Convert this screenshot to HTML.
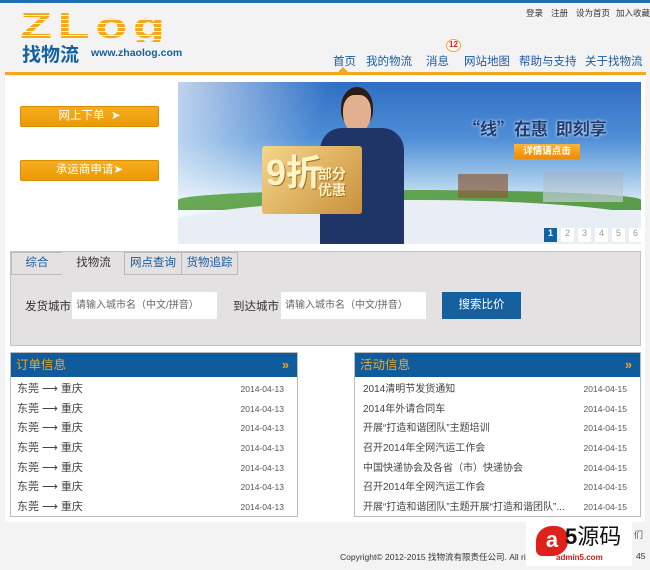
<!DOCTYPE html>
<html><head><meta charset="utf-8"><style>
*{margin:0;padding:0;box-sizing:border-box}
body{width:650px;height:570px;background:#f3f3f3;font-family:"Liberation Sans","Noto Sans CJK SC",sans-serif;position:relative;overflow:hidden;font-size:12px;color:#333}
.a{position:absolute;white-space:nowrap}
.top{left:0;top:0;width:650px;height:3px;background:#1c6db3}
.tl{top:7px;font-size:8.5px;color:#333}
.nav{top:53px;font-size:11.5px;color:#1a5c9e}
.btn{left:20px;width:139px;height:21px;background:linear-gradient(#f6ad1e,#ec9a05);border:1px solid #d88c00;border-radius:2px;color:#fff;font-size:11.5px;text-align:center;line-height:19px}
.tab{top:252px;height:23px;border:1px solid #b9b9b9;font-size:11.5px;color:#1a5c9e;text-align:center;line-height:21px;background:#e3e1e1}
.inp{top:292px;width:145px;height:27px;background:#fff;font-size:10px;color:#666;line-height:27px;padding-left:4px}
.box{border:1px solid #bcbcbc;background:#fff}
.hd{height:24px;background:#0f5b9b;color:#f4a81f;font-size:12.5px;line-height:24px;padding-left:5px;position:relative}
.hd span{position:absolute;right:8px;top:0;font-weight:bold}
.row{height:19.7px;line-height:19.7px;font-size:11px;position:relative;padding-left:6px;color:#444}
.row i{position:absolute;right:13px;font-style:normal;font-size:8.5px;color:#555}
</style></head><body>
<div class="a top"></div>
<div class="a tl" style="left:526px">登录</div>
<div class="a tl" style="left:551px">注册</div>
<div class="a tl" style="left:576px">设为首页</div>
<div class="a tl" style="left:616px">加入收藏</div>
<!-- logo -->
<div class="a" style="left:20px;top:12px;width:170px;height:30px;overflow:hidden">
 <div class="a" style="left:0;top:-4px;font:900 36px/36px 'Liberation Sans';color:#f7a816;letter-spacing:4px;transform:scaleX(1.45);transform-origin:left">ZLog</div>
 <div class="a" style="left:0;top:0;width:170px;height:30px;background:repeating-linear-gradient(rgba(0,0,0,0) 0 3px,#f3f3f3 3px 4px)"></div>
</div>
<div class="a" style="left:22px;top:40px;font-size:19px;font-weight:bold;color:#15609f">找物流</div>
<div class="a" style="left:91px;top:47px;font-size:10.5px;font-weight:bold;color:#15609f">www.zhaolog.com</div>
<div class="a nav" style="left:333px">首页</div>
<div class="a nav" style="left:366px">我的物流</div>
<div class="a nav" style="left:426px">消息</div>
<div class="a nav" style="left:464px">网站地图</div>
<div class="a nav" style="left:519px">帮助与支持</div>
<div class="a nav" style="left:585px">关于找物流</div>
<div class="a" style="left:446px;top:39px;width:15px;height:13px;border:1.5px solid #f4a81f;border-radius:50%;background:#fff;color:#d22;font-size:8px;text-align:center;line-height:10px;font-weight:bold">12</div>
<div class="a" style="left:5px;top:72px;width:641px;height:3px;background:#f4a81f"></div>
<div class="a" style="left:337px;top:67px;width:0;height:0;border-left:6px solid transparent;border-right:6px solid transparent;border-bottom:6px solid #f4a81f"></div>
<!-- content -->
<div class="a" style="left:5px;top:76px;width:640px;height:446px;background:#fff"></div>
<div class="a btn" style="top:106px">网上下单 &nbsp;➤</div>
<div class="a btn" style="top:160px">承运商申请➤</div>
<!-- banner -->
<div class="a" style="left:178px;top:82px;width:463px;height:162px;overflow:hidden;background:linear-gradient(180deg,#2f6ec4 0%,#4f8fd6 35%,#a9cdec 62%,#e9f1f7 78%,#f2f5f7 100%)">
 <div class="a" style="left:0;top:0;width:200px;height:162px;background:linear-gradient(110deg,rgba(255,255,255,.7),rgba(255,255,255,0) 60%)"></div>
 <div class="a" style="left:0;top:108px;width:463px;height:20px;background:linear-gradient(175deg,#58a13a,#3e8b2c);border-radius:50% 50% 0 0;opacity:.85"></div>
 <div class="a" style="left:-20px;top:118px;width:520px;height:60px;background:#e8eef3;border-radius:50% 50% 0 0"></div>
 <div class="a" style="left:365px;top:90px;width:80px;height:30px;background:linear-gradient(#9fb4c8,#c5d3df);opacity:.7"></div>
 <div class="a" style="left:280px;top:92px;width:50px;height:24px;background:#8b5d3c;opacity:.7"></div>
 <div class="a" style="left:163px;top:5px;width:32px;height:40px;background:#2a1d17;border-radius:50% 50% 40% 40%"></div>
 <div class="a" style="left:165px;top:13px;width:28px;height:38px;background:#e2b08f;border-radius:40% 40% 50% 50%"></div>
 <div class="a" style="left:142px;top:46px;width:84px;height:116px;background:#1f3567;border-radius:22px 22px 0 0"></div>
 <div class="a" style="left:84px;top:64px;width:100px;height:68px;background:linear-gradient(135deg,#f5d58c,#c9913a);border-radius:3px"></div>
 <div class="a" style="left:88px;top:66px;font:bold 36px/50px 'Liberation Sans','Noto Sans CJK SC',sans-serif;color:#fff3c8;text-shadow:1px 1px 0 #a3701f">9折</div>
 <div class="a" style="left:140px;top:84px;font:bold 14px/16px 'Noto Sans CJK SC',sans-serif;color:#fff3c8;text-shadow:1px 1px 0 #a3701f">部分<br>优惠</div>
 <div class="a" style="left:285px;top:33px;font:bold 17px 'Noto Sans CJK SC',sans-serif;color:#1f3d75;text-shadow:0 0 3px #fff">“线”在惠 &nbsp;即刻享</div>
 <div class="a" style="left:336px;top:62px;width:66px;height:15px;background:linear-gradient(#fbb437,#ef8a00);color:#fff;font-size:9.5px;font-weight:bold;text-align:center;line-height:15px">详情请点击</div>
 <div class="a" style="left:366px;top:146px;display:flex;gap:4px;font-size:9px">
  <b style="width:13px;height:14px;background:#15609f;color:#fff;text-align:center">1</b><b style="width:13px;height:14px;background:#fff;color:#999;text-align:center;font-weight:normal">2</b><b style="width:13px;height:14px;background:#fff;color:#999;text-align:center;font-weight:normal">3</b><b style="width:13px;height:14px;background:#fff;color:#999;text-align:center;font-weight:normal">4</b><b style="width:13px;height:14px;background:#fff;color:#999;text-align:center;font-weight:normal">5</b><b style="width:13px;height:14px;background:#fff;color:#999;text-align:center;font-weight:normal">6</b>
 </div>
</div>
<!-- search -->
<div class="a" style="left:10px;top:251px;width:631px;height:95px;background:#e3e1e1;border:1px solid #c3c3c3"></div>
<div class="a tab" style="left:11px;width:52px">综合</div>
<div class="a tab" style="left:62px;width:63px;border-color:transparent;color:#333;height:24px">找物流</div>
<div class="a tab" style="left:124px;width:58px">网点查询</div>
<div class="a tab" style="left:181px;width:57px">货物追踪</div>
<div class="a" style="left:25px;top:298px;font-size:11.5px">发货城市</div>
<div class="a inp" style="left:72px">请输入城市名（中文/拼音）</div>
<div class="a" style="left:233px;top:298px;font-size:11.5px">到达城市</div>
<div class="a inp" style="left:281px">请输入城市名（中文/拼音）</div>
<div class="a" style="left:442px;top:292px;width:79px;height:27px;background:#15609f;color:#fff;font-size:11.5px;text-align:center;line-height:27px">搜索比价</div>
<!-- lists -->
<div class="a box" style="left:10px;top:352px;width:288px;height:165px">
 <div class="hd">订单信息<span>»</span></div>
 <div style="padding-top:3px">
 <div class="row">东莞 ⟶ 重庆<i>2014-04-13</i></div>
 <div class="row">东莞 ⟶ 重庆<i>2014-04-13</i></div>
 <div class="row">东莞 ⟶ 重庆<i>2014-04-13</i></div>
 <div class="row">东莞 ⟶ 重庆<i>2014-04-13</i></div>
 <div class="row">东莞 ⟶ 重庆<i>2014-04-13</i></div>
 <div class="row">东莞 ⟶ 重庆<i>2014-04-13</i></div>
 <div class="row">东莞 ⟶ 重庆<i>2014-04-13</i></div>
 </div>
</div>
<div class="a box" style="left:354px;top:352px;width:287px;height:165px">
 <div class="hd">活动信息<span>»</span></div>
 <div style="padding-top:3px;font-size:10px">
 <div class="row" style="font-size:10px;padding-left:8px">2014清明节发货通知<i>2014-04-15</i></div>
 <div class="row" style="font-size:10px;padding-left:8px">2014年外请合同车<i>2014-04-15</i></div>
 <div class="row" style="font-size:10px;padding-left:8px">开展“打造和谐团队”主题培训<i>2014-04-15</i></div>
 <div class="row" style="font-size:10px;padding-left:8px">召开2014年全网汽运工作会<i>2014-04-15</i></div>
 <div class="row" style="font-size:10px;padding-left:8px">中国快递协会及各省（市）快递协会<i>2014-04-15</i></div>
 <div class="row" style="font-size:10px;padding-left:8px">召开2014年全网汽运工作会<i>2014-04-15</i></div>
 <div class="row" style="font-size:10px;padding-left:8px">开展“打造和谐团队”主题开展“打造和谐团队”...<i>2014-04-15</i></div>
 </div>
</div>
<!-- footer -->
<div class="a" style="left:340px;top:551px;font-size:8.5px;color:#333">Copyright© 2012-2015 找物流有限责任公司. All rights</div>
<div class="a" style="left:634px;top:528px;font-size:9px;color:#555">们</div>
<div class="a" style="left:636px;top:551px;font-size:8.5px;color:#333">45</div>
<div class="a" style="left:526px;top:522px;width:106px;height:44px;background:#fff"></div>
<div class="a" style="left:536px;top:526px;width:32px;height:30px;background:#e0201b;border-radius:50% 40% 50% 20%;color:#fff;font:bold 22px/28px 'Liberation Sans';text-align:center">a</div>
<div class="a" style="left:565px;top:522px;font:bold 22px/30px 'Liberation Sans','Noto Sans CJK SC',sans-serif;color:#111">5<span style="font-weight:normal">源码</span></div>
<div class="a" style="left:556px;top:553px;font:bold 8px 'Liberation Sans';color:#d01c1c">admin5.com</div>
</body></html>
